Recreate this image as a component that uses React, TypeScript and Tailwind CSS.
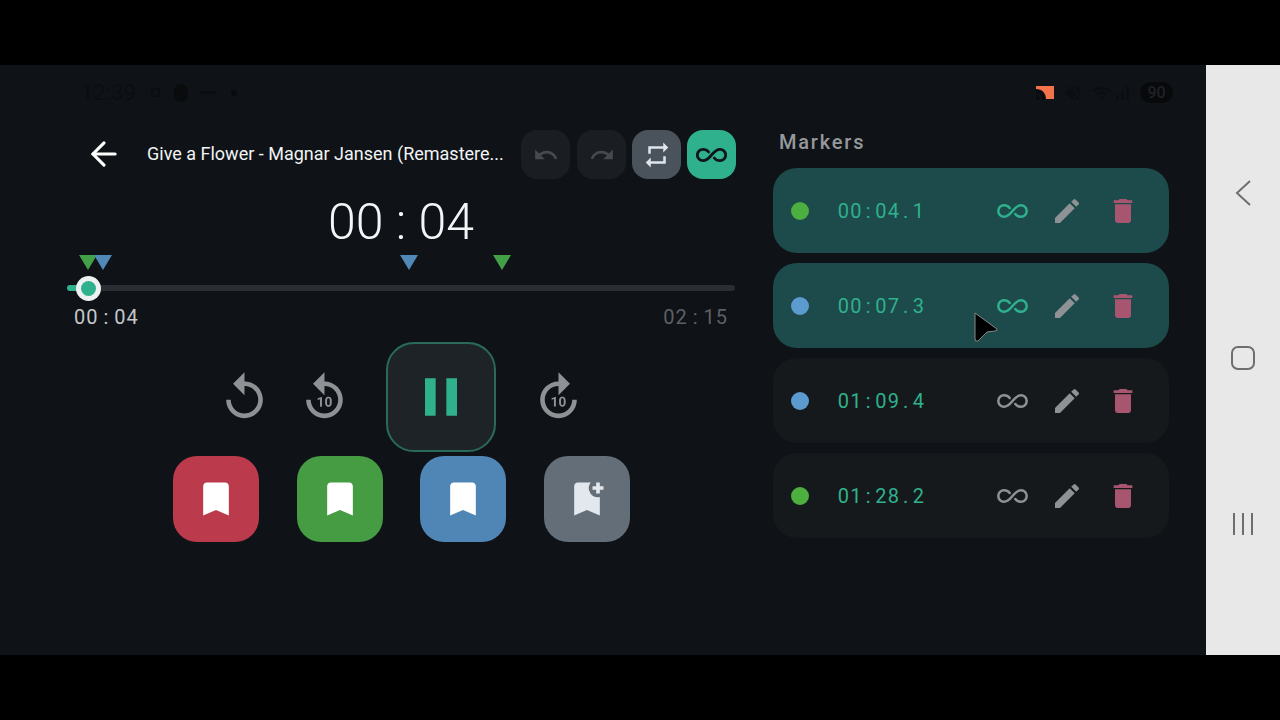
import {
  MdBookmark,
  MdBookmarkAdd,
  MdDelete,
  MdEdit,
  MdForward10,
  MdPause,
  MdRedo,
  MdRepeat,
  MdReplay,
  MdReplay10,
  MdUndo,
  MdVolumeOff,
  MdWifi,
  MdSignalCellularAlt,
} from 'react-icons/md';
import { ArrowLeft } from 'lucide-react';

const markers = [
  { time: '00:04.1', dot: 'bg-[#4caf3f]', active: true },
  { time: '00:07.3', dot: 'bg-[#5b9bd0]', active: true },
  { time: '01:09.4', dot: 'bg-[#5b9bd0]', active: false },
  { time: '01:28.2', dot: 'bg-[#4caf3f]', active: false },
];

const pins = [
  { color: 'border-t-[#43a047]', left: 'left-[12px]' },
  { color: 'border-t-[#5088b8]', left: 'left-[27px]' },
  { color: 'border-t-[#5088b8]', left: 'left-[333px]' },
  { color: 'border-t-[#43a047]', left: 'left-[426px]' },
];

function Infinity({ stroke, className }: { stroke: number; className?: string }) {
  return (
    <svg width="31" height="16" viewBox="0 0 31 16" fill="none" stroke="currentColor" strokeWidth={stroke} strokeLinecap="round" className={className}>
      <path d="M12.7 5C11.5 3.5 9.7 2.3 7 2.3a5.7 5.7 0 0 0 0 11.4C11 13.7 13 11 15.5 8C18 5 20 2.3 24 2.3a5.7 5.7 0 0 1 0 11.4C21.3 13.7 19.5 12.5 18.3 11" />
    </svg>
  );
}

// mono looking digits, the app font has even cells
function CellText({ text }: { text: string }) {
  return (
    <span className="flex w-[87.5px] text-[#2fb18d] text-[20px] leading-[24px]">
      {text.split('').map((c, i) => (
        <span key={i} className="w-[12.5px] text-center">
          {c}
        </span>
      ))}
    </span>
  );
}

function Clock({ m, s, className }: { m: string; s: string; className: string }) {
  return (
    <span className={`tracking-[1px] ${className}`}>
      {m}
      <span className="mx-[5px]">:</span>
      {s}
    </span>
  );
}

function StatusBar() {
  return (
    <div className="h-[55px] flex items-center justify-between pl-[81px] pr-[33px] text-[#0b0e11] shrink-0">
      <div className="flex items-center gap-2">
        <span className="text-[22px] mr-[7px]">12:39</span>
        <div className="w-[9px] h-[9px] border-2 border-[#0b0e11]" />
        <div className="w-[14px] h-[18px] ml-[6px] rounded-full bg-[#090b0d]" />
        <div className="w-[16px] h-[3px] ml-[4px] rounded-full bg-[#0b0e11]" />
        <div className="w-[6px] h-[6px] ml-[7px] rounded-full bg-[#090b0d]" />
      </div>
      <div className="flex items-center">
        <svg width="20" height="16" viewBox="0 0 20 16" className="mr-[8px]">
          <path d="M1 1H19V14H11C11 8 7 4 1 4Z" fill="#f5734a" />
          <path d="M1 5C6 5 10 9 10 15H7C7 11 5 8 1 8ZM1 10C3 10 5 12 5 15H1Z" fill="#0a0c0e" />
        </svg>
        <MdVolumeOff size={20} className="mr-[9px]" />
        <MdWifi size={20} />
        <MdSignalCellularAlt size={20} className="mr-[8px]" />
        <div className="w-[33px] h-[21px] rounded-full bg-[#08090b] text-[#1e2226] text-[16px] leading-[21px] text-center font-medium">
          90
        </div>
      </div>
    </div>
  );
}

function Header() {
  return (
    <div className="flex items-center h-[49px]">
      <div className="w-[80px] flex justify-center -mt-[2px] pr-[6px] shrink-0">
        <ArrowLeft size={38} strokeWidth={2} className="text-white" />
      </div>
      <span className="text-[18px] text-[#f2f3f4] whitespace-nowrap w-[374px] shrink-0 -mt-[2px]">
        Give a Flower - Magnar Jansen (Remastere...
      </span>
      <div className="flex gap-[6px] shrink-0">
        <button className="w-[49px] h-[49px] rounded-[16px] bg-[#1a1e22] flex items-center justify-center text-[#464a4e]">
          <MdUndo size={26} />
        </button>
        <button className="w-[49px] h-[49px] ml-[1px] rounded-[16px] bg-[#1a1e22] flex items-center justify-center text-[#464a4e]">
          <MdRedo size={26} />
        </button>
        <button className="w-[49px] h-[49px] rounded-[16px] bg-[#4a535c] flex items-center justify-center text-[#e0e5ea]">
          <MdRepeat size={30} />
        </button>
        <button className="w-[49px] h-[49px] rounded-[16px] bg-[#2fb18d] flex items-center justify-center text-[#10161a]">
          <Infinity stroke={2.8} />
        </button>
      </div>
    </div>
  );
}

function Timeline() {
  return (
    <div className="mt-[9px]">
      <div className="relative h-[15px]">
        {pins.map((p, i) => (
          <div
            key={i}
            className={`absolute top-0 w-0 h-0 border-l-[9px] border-r-[9px] border-t-[15px] border-l-transparent border-r-transparent ${p.color} ${p.left}`}
          />
        ))}
      </div>
      <div className="relative h-[20px] mt-[8px] flex items-center">
        <div className="w-full h-[6px] rounded-full bg-[#2a2e32]" />
        <div className="absolute left-0 w-[22px] h-[6px] rounded-l-full bg-[#2fb18d]" />
        <div className="absolute left-[9px] w-[25px] h-[25px] rounded-full bg-[#eef1f1] flex items-center justify-center">
          <div className="w-[15px] h-[15px] rounded-full bg-[#2fb18d]" />
        </div>
      </div>
      <div className="flex justify-between mt-[7px] px-[7px] text-[20px] leading-[24px]">
        <Clock m="00" s="04" className="text-[#c5c8ca]" />
        <Clock m="02" s="15" className="text-[#5c6065]" />
      </div>
    </div>
  );
}

function Transport() {
  return (
    <div className="flex items-center justify-center gap-[35px] mt-[13px] text-[#8e9295]">
      <div className="flex gap-[25px] -mr-[1px]">
        <MdReplay size={55} />
        <MdReplay10 size={55} />
      </div>
      <button className="w-[110px] h-[110px] rounded-[28px] bg-[#1e2327] border-2 border-[#2a6a5c] flex items-center justify-center text-[#2fb18d]">
        <MdPause size={64} />
      </button>
      <MdForward10 size={55} />
    </div>
  );
}

function BookmarkRow() {
  return (
    <div className="flex justify-center gap-[37.7px] mt-[4px] pl-[1px]">
      <button className="w-[86px] h-[86px] rounded-[24px] bg-[#bb3a4c] flex items-center justify-center text-white">
        <MdBookmark size={44} />
      </button>
      <button className="w-[86px] h-[86px] rounded-[24px] bg-[#469c42] flex items-center justify-center text-white">
        <MdBookmark size={44} />
      </button>
      <button className="w-[86px] h-[86px] rounded-[24px] bg-[#5086b6] flex items-center justify-center text-white">
        <MdBookmark size={44} />
      </button>
      <button className="w-[86px] h-[86px] rounded-[24px] bg-[#646e78] flex items-center justify-center text-[#e3e8ef]">
        <MdBookmarkAdd size={44} />
      </button>
    </div>
  );
}

function MarkerCard({ time, dot, active }: { time: string; dot: string; active: boolean }) {
  return (
    <div
      className={`h-[85px] rounded-[24px] flex items-center pl-[18px] ${
        active ? 'bg-[#1d4a4a]' : 'bg-[#15191c]'
      }`}
    >
      <div className={`w-[18px] h-[18px] rounded-full ${dot}`} />
      <div className="ml-[28px] mr-[72px]">
        <CellText text={time} />
      </div>
      <Infinity stroke={2.5} className={active ? 'text-[#2fb18d]' : 'text-[#8e9295]'} />
      <MdEdit size={32} className="ml-[23px] text-[#8e9295]" />
      <MdDelete size={32} className="ml-[24px] text-[#a85570]" />
    </div>
  );
}

function NavBar() {
  return (
    <div className="w-[74px] bg-[#e8e8e8] flex flex-col items-center pt-[112px] shrink-0">
      <svg width="18" height="32" viewBox="0 0 18 32" fill="none" stroke="#6e6e6e" strokeWidth="2">
        <path d="M16 4 L3 16 L16 28" />
      </svg>
      <div className="w-[24px] h-[24px] mt-[137px] border-2 border-[#6e6e6e] rounded-[7px]" />
      <svg width="24" height="24" viewBox="0 0 24 24" className="mt-[142px]" fill="none" stroke="#6e6e6e" strokeWidth="2">
        <path d="M3 1 V23 M12 1 V23 M21 1 V23" />
      </svg>
    </div>
  );
}

export default function App() {
  return (
    <div className="w-[1280px] h-[720px] bg-black flex flex-col overflow-hidden font-['Roboto',sans-serif]">
      <div className="h-[65px] shrink-0" />
      <div className="h-[590px] flex">
        <div className="relative flex-1 bg-[#0f1317] flex flex-col">
          <StatusBar />
          <div className="flex pt-[10px] pl-[67px] gap-[38px]">
            <div className="w-[668px]">
              <Header />
              <div className="mt-[19px] h-[48px] text-center text-[50px] leading-[48px] font-light text-[#f4f5f6]">
                00 : 04
              </div>
              <Timeline />
              <Transport />
              <BookmarkRow />
            </div>
            <div className="w-[396px]">
              <div className="pl-[6px] h-[38px] text-[20px] leading-[24px] font-medium tracking-[1.8px] text-[#96999c]">
                Markers
              </div>
              <div className="flex flex-col gap-[10px]">
                {markers.map((m) => (
                  <MarkerCard key={m.time} {...m} />
                ))}
              </div>
            </div>
          </div>
          <svg
            className="absolute left-[973px] top-[246px]"
            width="27"
            height="32"
            viewBox="0 0 27 32"
          >
            <path
              d="M2 2 L24 18 Q25 20 22 20 L14 21 L5 30 Q2 31 2 28 Z"
              fill="#000"
              stroke="#888"
              strokeWidth="1"
              strokeLinejoin="round"
            />
          </svg>
        </div>
        <NavBar />
      </div>
      <div className="h-[65px] shrink-0" />
    </div>
  );
}
